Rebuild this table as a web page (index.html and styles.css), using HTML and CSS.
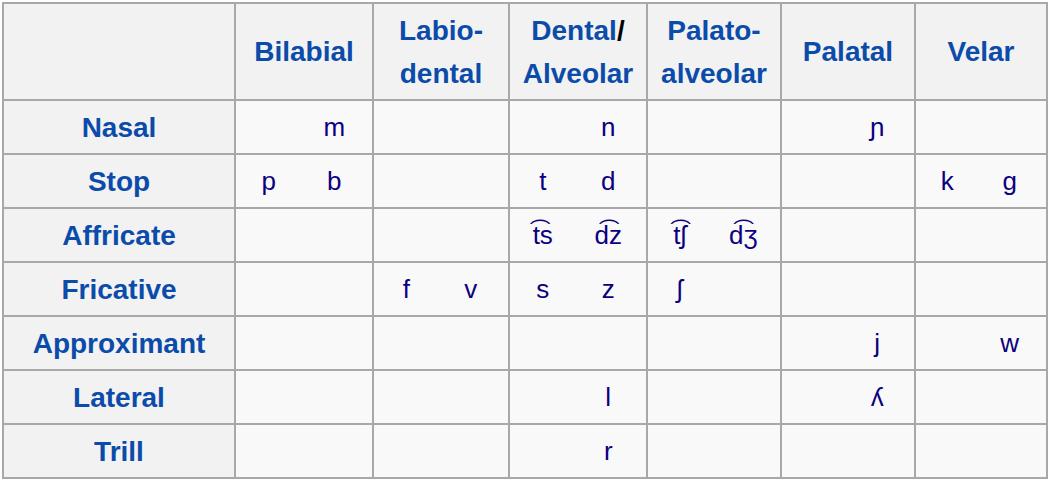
FILE: index.html
```html
<!DOCTYPE html>
<html>
<head>
<meta charset="utf-8">
<link rel="stylesheet" href="styles.css">
</head>
<body>
<table class="ipa">
  <colgroup>
    <col class="c-head">
    <col class="c138">
    <col class="c136">
    <col class="c138">
    <col class="c134">
    <col class="c134">
    <col class="c132">
  </colgroup>
  <thead>
    <tr>
      <th class="corner"></th>
      <th><a>Bilabial</a></th>
      <th><a>Labio-<br>dental</a></th>
      <th><a>Dental</a>/<br><a>Alveolar</a></th>
      <th><a>Palato-<br>alveolar</a></th>
      <th><a>Palatal</a></th>
      <th><a>Velar</a></th>
    </tr>
  </thead>
  <tbody>
    <tr>
      <th><a>Nasal</a></th>
      <td><div class="pair"><span></span><span>m</span></div></td>
      <td></td>
      <td><div class="pair"><span></span><span>n</span></div></td>
      <td></td>
      <td><div class="pair"><span></span><span>ɲ</span></div></td>
      <td></td>
    </tr>
    <tr>
      <th><a>Stop</a></th>
      <td><div class="pair"><span>p</span><span>b</span></div></td>
      <td></td>
      <td><div class="pair"><span>t</span><span>d</span></div></td>
      <td></td>
      <td></td>
      <td><div class="pair"><span>k</span><span>g</span></div></td>
    </tr>
    <tr>
      <th><a>Affricate</a></th>
      <td></td>
      <td></td>
      <td><div class="pair"><span>t͡s</span><span>d͡z</span></div></td>
      <td><div class="pair"><span>t͡ʃ</span><span>d͡ʒ</span></div></td>
      <td></td>
      <td></td>
    </tr>
    <tr>
      <th><a>Fricative</a></th>
      <td></td>
      <td><div class="pair"><span>f</span><span>v</span></div></td>
      <td><div class="pair"><span>s</span><span>z</span></div></td>
      <td><div class="pair"><span>ʃ</span><span></span></div></td>
      <td></td>
      <td></td>
    </tr>
    <tr>
      <th><a>Approximant</a></th>
      <td></td>
      <td></td>
      <td></td>
      <td></td>
      <td><div class="pair"><span></span><span>j</span></div></td>
      <td><div class="pair"><span></span><span>w</span></div></td>
    </tr>
    <tr>
      <th><a>Lateral</a></th>
      <td></td>
      <td></td>
      <td><div class="pair"><span></span><span>l</span></div></td>
      <td></td>
      <td><div class="pair"><span></span><span>ʎ</span></div></td>
      <td></td>
    </tr>
    <tr>
      <th><a>Trill</a></th>
      <td></td>
      <td></td>
      <td><div class="pair"><span></span><span>r</span></div></td>
      <td></td>
      <td></td>
      <td></td>
    </tr>
  </tbody>
</table>
</body>
</html>
```

FILE: styles.css
```css
html, body {
  margin: 0;
  padding: 0;
  background: #ffffff;
}

body {
  padding: 2px;
  font-family: "Liberation Sans", Arial, sans-serif;
}

.ipa {
  border-collapse: collapse;
  table-layout: fixed;
  width: 1046px;
  border: 2px solid #a8a8a8;
}

.c-head { width: 232px; }
.c138 { width: 138px; }
.c136 { width: 136px; }
.c134 { width: 134px; }
.c132 { width: 132px; }

.ipa th,
.ipa td {
  border: 2px solid #a8a8a8;
  padding: 0;
  text-align: center;
  vertical-align: middle;
}

.ipa th {
  background: #f2f2f2;
  font-size: 28px;
  font-weight: bold;
  line-height: 43px;
  color: #000000;
  height: 52px;
}

.ipa thead th {
  height: 95px;
}

.ipa th a {
  color: #0b4ba9;
}

.ipa td {
  background: #f9f9f9;
  color: #0b0080;
  font-size: 26px;
  height: 52px;
  font-family: "Liberation Sans", "DejaVu Sans", sans-serif;
}

.pair {
  display: flex;
  padding-right: 5px;
}

.pair span {
  flex: 1 1 0;
  text-align: center;
}
```
